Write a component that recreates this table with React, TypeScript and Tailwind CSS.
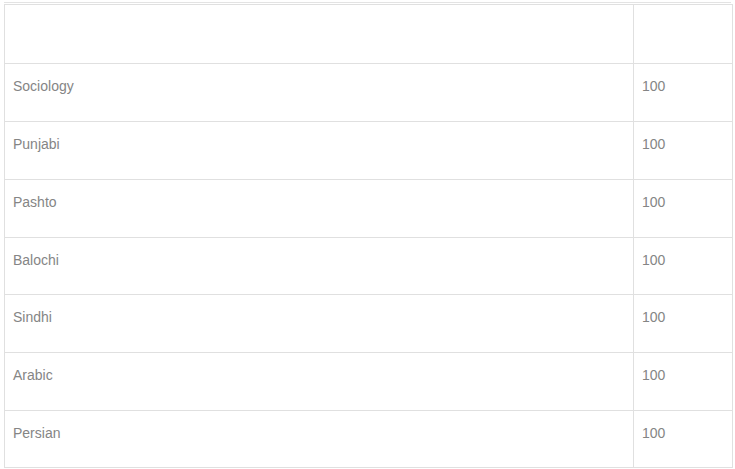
import React from "react";

const rows: [string, string][] = [
  ["Sociology", "h-[58px]"],
  ["Punjabi", "h-[58px]"],
  ["Pashto", "h-[58px]"],
  ["Balochi", "h-[57px]"],
  ["Sindhi", "h-[58px]"],
  ["Arabic", "h-[58px]"],
  ["Persian", "h-[57px]"],
];

export default function App() {
  return (
    <div className="w-[735px] h-[469px] bg-white pt-[2px] px-[4px] overflow-hidden" style={{ fontFamily: '"Liberation Sans", Arial, sans-serif' }}>
      <div className="border-t border-[#e3e3e3] pt-[1px]">
        <table className="w-[729px] border-collapse text-[14px] text-[#858585]">
          <tbody>
            <tr className="h-[59px]">
              <td className="border border-[#e0e0e0] w-[629px]"></td>
              <td className="border border-[#e0e0e0]"></td>
            </tr>
            {rows.map(([r, h]) => (
              <tr key={r} className={h}>
                <td className="border border-[#e0e0e0] px-[8px] align-top pt-[12px]">{r}</td>
                <td className="border border-[#e0e0e0] px-[8px] align-top pt-[12px]">100</td>
              </tr>
            ))}
          </tbody>
        </table>
      </div>
    </div>
  );
}
